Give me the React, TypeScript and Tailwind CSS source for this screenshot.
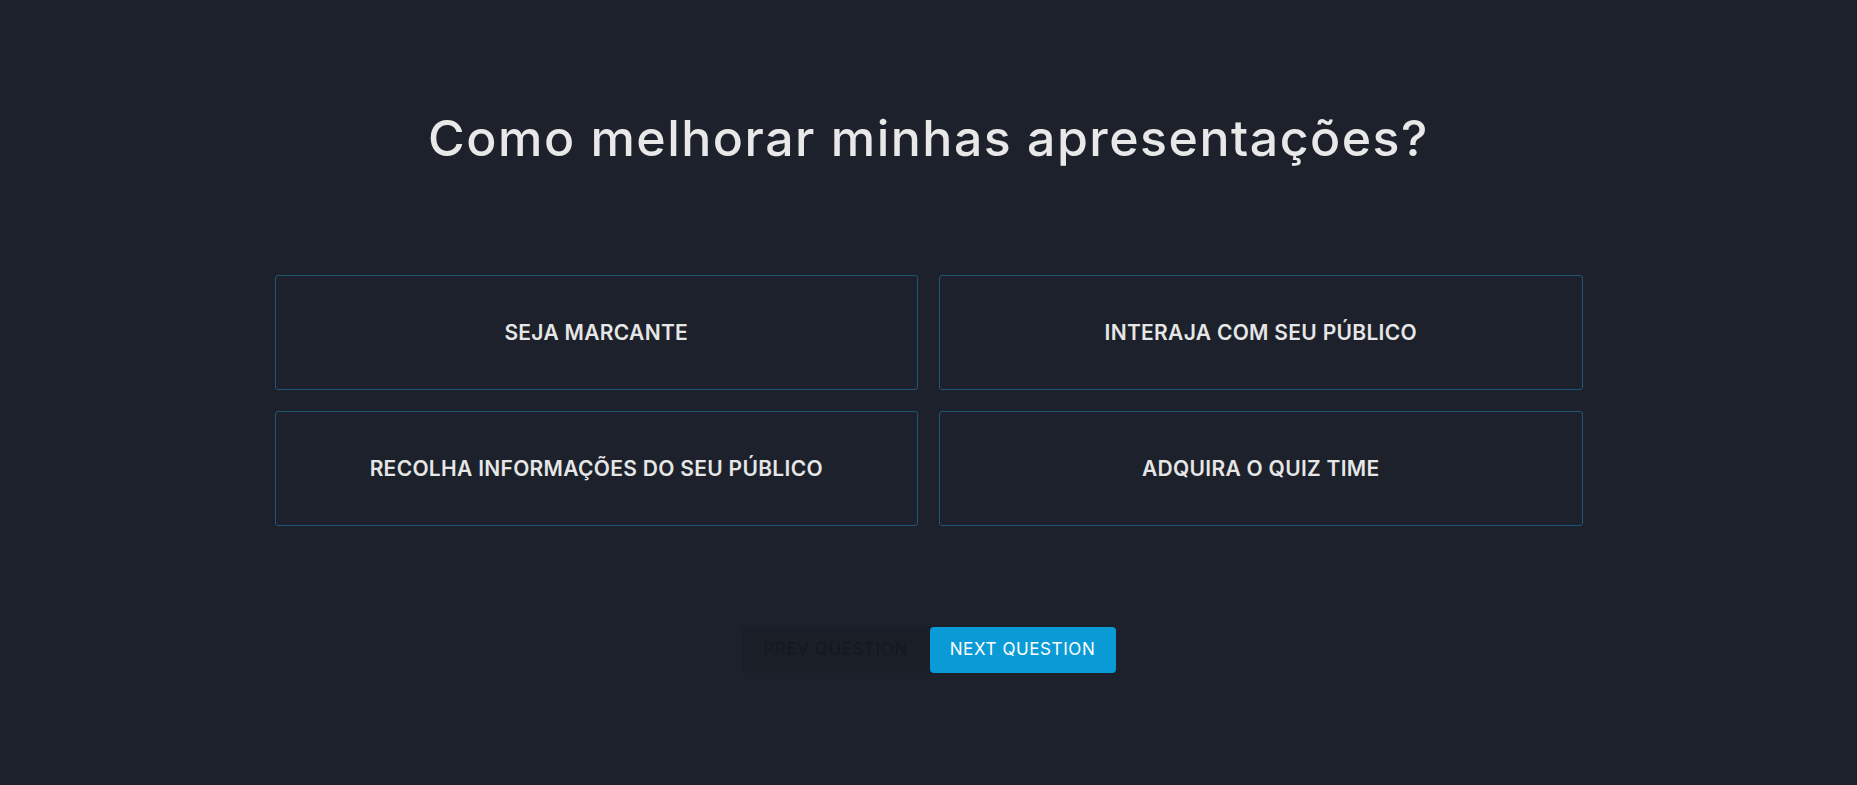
import React from "react";

const answers = [
  "SEJA MARCANTE",
  "INTERAJA COM SEU PÚBLICO",
  "RECOLHA INFORMAÇÕES DO SEU PÚBLICO",
  "ADQUIRA O QUIZ TIME",
];

export default function App() {
  return (
    <div
      className="min-h-[785px] w-full bg-[#1c212b] text-[#e6e6e6]"
      style={{ fontFamily: "Inter, 'Noto Sans', sans-serif" }}
    >
      <div className="flex flex-col items-center pt-[108px]">
        <h1 className="text-[50px] leading-[60px] font-medium tracking-[1.5px] text-[#e8e8e8]">
          Como melhorar minhas apresentações?
        </h1>
        <div className="mt-[107px] grid w-[1308px] grid-cols-2 gap-[21px]">
          {answers.map((a) => (
            <div
              key={a}
              className="flex h-[115px] items-center justify-center rounded-[3px] border border-[#1f5673] bg-[#1c212b] text-[21px] font-semibold tracking-[0.3px] text-[#e6e6e6]"
            >
              {a}
            </div>
          ))}
        </div>
        <div className="mt-[101px] flex items-center justify-center">
          <button className="flex h-[46px] w-[188px] items-center justify-center rounded-[3px] bg-[#1a1e27] text-[17px] tracking-[0.6px] text-[#141820]">
            PREV QUESTION
          </button>
          <button className="flex h-[46px] w-[186px] items-center justify-center rounded-[4px] bg-[#0a9bd6] text-[17px] tracking-[0.6px] text-white">
            NEXT QUESTION
          </button>
        </div>
      </div>
    </div>
  );
}
